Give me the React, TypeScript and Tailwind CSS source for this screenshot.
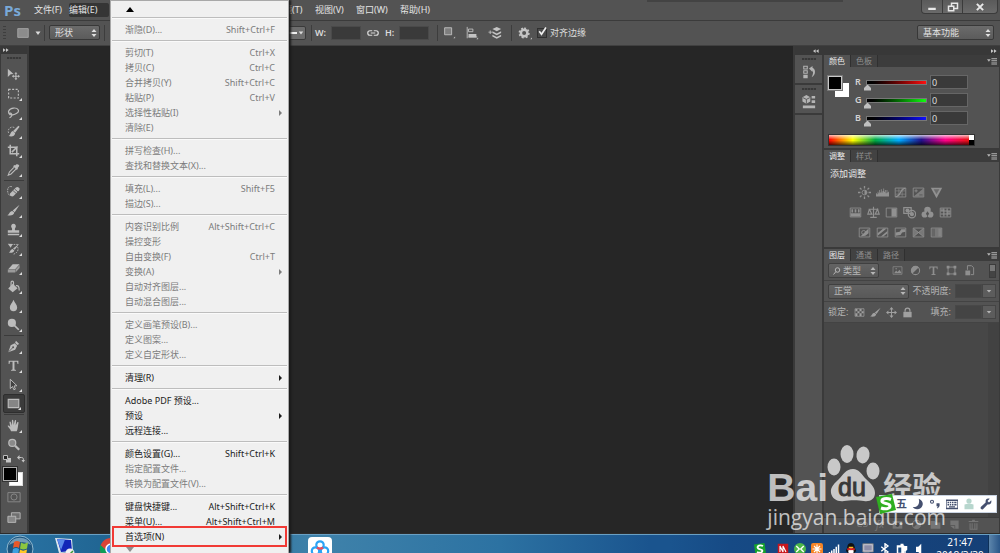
import type { ReactNode } from "react";
import clsx from "clsx";

type IconProps = { children: ReactNode; className?: string };

function Icon({ children, className }: IconProps) {
  return (
    <svg viewBox="0 0 16 16" className={clsx("shrink-0", className ?? "h-4 w-4")} fill="currentColor" aria-hidden="true">
      {children}
    </svg>
  );
}

const line = { fill: "none", stroke: "currentColor" };

function UpDown({ className }: { className?: string }) {
  return (
    <svg viewBox="0 0 6 8" className={clsx("pointer-events-none absolute h-2 w-1.5", className)} fill="currentColor">
      <path d="M3 0 5.500 3h-5zM3 8 .5 5h5z" />
    </svg>
  );
}

function Select({ label, value, className, children }: { label: string; value: string; className?: string; children?: ReactNode }) {
  return (
    <div className={clsx("relative flex h-[15px] items-center text-[#e0e0e0]", className)}>
      <select
        aria-label={label}
        className={clsx(
          "h-full w-full appearance-none rounded-xs border border-[#383838] bg-linear-to-b from-[#6b6b6b] to-[#5b5b5b] text-[9px] leading-3",
          children ? "pl-[14px]" : "pl-[5px]",
        )}
      >
        <option>{value}</option>
      </select>
      {children}
      <UpDown className="right-[3px]" />
    </div>
  );
}

const Divider = () => <div className="h-4 w-px bg-[#3d3d3d]" />;

/* ---------- menu bar ---------- */

function MenuBar() {
  const item = "h-3.5 rounded-xs text-left text-[9px] leading-3.5 text-[#e4e4e4]";
  return (
    <header className="flex h-[21px] shrink-0 items-start border-b border-[#3b3b3b] pl-1">
      <h1 className="w-[25px] font-['Open_Sans',sans-serif] text-[15px] leading-5 font-bold text-[#79a9d8]">Ps</h1>
      <nav className="flex pt-[3px]">
        <button className={clsx(item, "ml-[5px] w-[35px]")}>文件(F)</button>
        <button className={clsx(item, "w-10 bg-[#353535] text-center")}>编辑(E)</button>
        <button className={clsx(item, "ml-[165px] w-[41px]")}>滤镜(T)</button>
        <button className={clsx(item, "w-[41px]")}>视图(V)</button>
        <button className={clsx(item, "w-11")}>窗口(W)</button>
        <button className={item}>帮助(H)</button>
      </nav>
      <div className="mr-[78px] ml-auto h-0.5 w-[196px] bg-[#434343]" />
      <div className="mr-0.5 flex h-3.5 divide-x divide-[#3b3b3b] rounded-b-sm border border-t-0 border-[#3b3b3b] bg-linear-to-b from-[#5a5a5a] to-[#6a6a6a] text-[#e8e8e8]">
        <button aria-label="最小化" className="flex w-[21px] items-center justify-center">
          <Icon className="h-3 w-3"><path d="M3 9h10v3H3z" /></Icon>
        </button>
        <button aria-label="还原" className="flex w-5 items-center justify-center">
          <Icon className="h-3 w-3"><path {...line} strokeWidth="2" d="M6 6V3h8v7h-4M2 7h7v6H2z" /></Icon>
        </button>
        <button aria-label="关闭" className="flex w-[34px] items-center justify-center">
          <Icon className="h-2.5 w-2.5"><path {...line} strokeWidth="3.200" d="m3 3 10 10M13 3 3 13" /></Icon>
        </button>
      </div>
    </header>
  );
}

/* ---------- options bar ---------- */

function OptionsBar() {
  const field = "h-[14px] w-[30px] border border-[#4a4a4a] bg-[#3a3a3a] px-0.5 text-[9px] text-[#ddd]";
  return (
    <div className="flex h-[25px] shrink-0 items-center border-b border-[#404040] pb-px text-[9px] text-[#dcdcdc]">
      <div className="ml-[3px] h-3.5 w-[3px] bg-[repeating-linear-gradient(#3e3e3e_0_1px,transparent_1px_3px)]" />
      <button aria-label="矩形工具" className="ml-[10px] flex items-center">
        <Icon className="h-3.5 w-3.5"><path fill="#8c8c8c" stroke="#a8a8a8" d="M2 3h12v10H2z" /></Icon>
        <Icon className="ml-1 h-2 w-2"><path d="M3 5h10l-5 7z" /></Icon>
      </button>
      <div className="mr-1 ml-[2px]"><Divider /></div>
      <Select label="工具模式" value="形状" className="w-[51px]" />
      <div className="mx-1"><Divider /></div>
      <button aria-label="描边类型" className="ml-[143px] flex h-3.5 w-[54px] items-center justify-end rounded-xs border border-[#3a3a3a] bg-[#6d6d6d]">
        <span className="h-0.5 w-9 bg-[#eee]" />
        <Icon className="mx-px h-1.5 w-1.5"><path d="M2 4h12l-6 8z" /></Icon>
      </button>
      <div className="mr-[3px] ml-[5px]"><Divider /></div>
      <label htmlFor="shape-w" className="w-4 font-semibold">W:</label>
      <input id="shape-w" className={field} />
      <Icon className="mx-[6px] h-3 w-3"><path {...line} strokeWidth="1.600" d="M7 5H4a3 3 0 0 0 0 6h3M9 5h3a3 3 0 0 1 0 6H9M5 8h6" /></Icon>
      <label htmlFor="shape-h" className="w-3.5 font-semibold">H:</label>
      <input id="shape-h" className={field} />
      <div className="ml-2"><Divider /></div>
      <div className="ml-1 flex gap-[9px] text-[#c4c4c4]">
        <button aria-label="路径操作">
          <Icon className="h-3.5 w-3.5"><path fill="#7e7e7e" stroke="currentColor" d="M3 2h8v8H3z" /><path d="M15 12v2h-2z" /></Icon>
        </button>
        <button aria-label="路径对齐方式">
          <Icon className="h-3.5 w-3.5"><path {...line} d="M2.500 1v13M4 3.500h5v3H4zM4 12.500h10" /><path d="M4 9h9v4H4zM15 13v2h-2z" /></Icon>
        </button>
        <button aria-label="路径排列方式">
          <Icon className="h-3.5 w-3.5"><path d="m10 1 5 2.500L10 6 5 3.500zM5 6l5 2.500L15 6v2l-5 2.500L5 8zM5 10l5 2.500 5-2.500v2l-5 2.500L5 12zM2 5h1v1.500h1.500v1H3V9H2V7.500H.5v-1H2z" /></Icon>
        </button>
      </div>
      <div className="ml-[9px]"><Divider /></div>
      <button aria-label="设置" className="ml-[6px] text-[#c4c4c4]">
        <Icon className="h-3.5 w-3.5">
          <circle cx="7" cy="8" r="3.700" {...line} strokeWidth="2.800" />
          <path {...line} strokeWidth="1.800" strokeDasharray="2.200 2.120" d="M7 2.500a5.500 5.500 0 1 1-.01 0z" />
          <path d="M16 13v2h-2z" />
        </Icon>
      </button>
      <label className="ml-[5px] flex items-center gap-[3px]">
        <span className="relative flex">
          <input type="checkbox" defaultChecked className="peer h-2.5 w-2.5 appearance-none border border-[#303030] bg-[#4a4a4a]" />
          <Icon className="pointer-events-none absolute -top-0.5 left-0 hidden h-3 w-3 peer-checked:block">
            <path {...line} stroke="#eee" strokeWidth="2.200" d="m3 7 3 4 6-9" />
          </Icon>
        </span>
        对齐边缘
      </label>
      <Select label="工作区" value="基本功能" className="mr-1.5 ml-auto w-[77px]" />
    </div>
  );
}

/* ---------- toolbox ---------- */

type Tool = { name: string; art: ReactNode; active?: boolean; plain?: boolean };

const toolGroups: Tool[][] = [
  [
    { name: "移动工具", plain: true, art: <path d="M1 1l7 6.500-3.500.3L1 11zM11 5l1.800 2.200H11.600V9.500h2V8.200L16 10l-2.400 1.900v-1.200h-2v2h1.200L11 15l-1.900-2.300h1.200v-2h-2v1.200L6 10l2.300-1.900v1.300h2V7.200H9.100z" /> },
    { name: "矩形选框工具", art: <path {...line} strokeWidth="1.400" strokeDasharray="2.500 1.800" d="M2 3h12v10.500H2z" /> },
    { name: "套索工具", art: <path {...line} strokeWidth="1.500" d="M4 11C0 8 2 3 8 2.500c6-.5 8 4 4 6.500-3 2-7 2.500-8.500 1-1-1 1-2 2-.5s0 4-2.500 5" /> },
    { name: "快速选择工具", art: <><path {...line} strokeDasharray="2 1.500" d="M9 3C4 1 0 6 2 10" /><path d="M15.500 2 10 9.500 7.500 7.500 14 1zM7 7.500l3 2.500C9.500 13.500 6 15 2 13.500c2.500-1 2-5 5-6z" /></> },
    { name: "裁剪工具", art: <path {...line} strokeWidth="1.900" d="M4 1v11h11M1 4h11v11M6 10l7-7" /> },
    { name: "吸管工具", art: <><path d="M10 3c2-3 5-1 5 0s-1 2.500-2 3l.500 1L12 8.500 7.500 4 9 2.500z" /><path {...line} strokeWidth="1.300" d="M8.500 5.500 3 11l-1.500 4L5 13.500l6-6" /></> },
  ],
  [
    { name: "污点修复画笔工具", art: <><path {...line} strokeDasharray="2 1" d="M6 2C2 1 0 4 1 9s4 4 5 3" /><path d="m4 10 7-7c2-2 6 1 4 3.500l-7 7C6 15.500 2 12 4 10z" /><path stroke="#535353" d="m7.500 7 4 3.500M9.500 5l4 3.500" /></> },
    { name: "画笔工具", art: <path d="M15.500 1 9.500 10 7 8zM6.500 8.500 9 10.500C8.500 14 4 15 0 13.500c3 0 3-5 6.500-5z" /> },
    { name: "仿制图章工具", art: <path d="M8 1a3 3 0 0 1 2.500 4.500C9.500 7 9.500 8 10 9h5v3H1V9h5c.5-1 .5-2-.5-3.500A3 3 0 0 1 8 1zM1 13.300h14V15H1z" /> },
    { name: "历史记录画笔工具", art: <><path d="M15 2 9.500 9.500 7.500 8zM7 8.500l2 2C8.500 13 5 14 2 13c2-.5 2-4 5-4.500zM1 2l6 .5L4.500 7z" /><path {...line} strokeDasharray="2 1.200" d="M5 3h9M13 6c2 4-1 8-5 9" /></> },
    { name: "橡皮擦工具", art: <><path d="M7 4h8.500L10 10H1.500z" /><path fill="#9a9a9a" d="M1 10.500h9V14H1zM10.500 10.500 15.500 5v3.500l-5 5.500z" /></> },
    { name: "油漆桶工具", art: <><path d="M7 4.500 13 10l-6 5-5.500-4.500z" /><path {...line} strokeWidth="1.500" d="M8 9V3c0-2-3-2-3 0v5M11 7c3-.5 4 1 4 6" /></> },
    { name: "模糊工具", art: <path d="M8 1c1.500 4 4.500 6 4.500 9.500a4.500 4.500 0 0 1-9 0C3.500 7 6.500 5 8 1z" /> },
    { name: "减淡工具", art: <><circle cx="6" cy="6" r="5" /><path {...line} strokeWidth="2" d="m9 9 5.500 5.500" /></> },
  ],
  [
    { name: "钢笔工具", art: <><path d="M11 1l4 4-2.500 1L10 3.500zM9.500 4l3 3L10 12l-8.500 3L4.500 6.500z" /><path stroke="#535353" d="m2 14.500 5-5" /><circle cx="7.500" cy="9" r="1.200" fill="#535353" /></> },
    { name: "文字工具", art: <path d="M2 2h12v4h-1l-.7-2.500H9.200V13l1.800.6v.9H5v-.9l1.800-.6V3.500H3.700L3 6H2z" /> },
    { name: "路径选择工具", art: <path fill="#414141" stroke="currentColor" strokeWidth="1.200" d="M4 1.500V13l2.800-2.500 1.700 4 1.800-.8-1.600-3.900 3.500-.3z" /> },
    { name: "矩形工具", active: true, art: <path fill="#868686" stroke="currentColor" strokeWidth="1.400" d="M1.500 3h13v10h-13z" /> },
  ],
  [
    { name: "抓手工具", art: <path d="M5 15C4 12 1.500 10 .8 8.500c.7-.8 2-.3 3.200 1.300L3 4c0-1.200 1.500-1.200 1.700 0L6 8V2c0-1.300 1.700-1.300 1.800 0L8.200 7.500 9.500 2c.4-1.200 1.900-.8 1.700.4L10.700 8l1.800-3.800c.7-1 2-.4 1.600.8C13.500 8 13.500 12 12 15z" /> },
    { name: "缩放工具", plain: true, art: <><circle cx="6.500" cy="6" r="4.300" fill="#8a8a8a" stroke="currentColor" strokeWidth="1.500" /><path {...line} strokeWidth="2.800" d="m10 9.500 5 5" /></> },
  ],
];

function ToolButton({ name, art, active, plain }: Tool) {
  return (
    <button
      aria-label={name}
      className={clsx(
        "relative mx-0.5 flex h-[19px] items-center justify-center rounded-xs pr-0.5 text-[#bcbcbc]",
        active && "border border-[#2e2e2e] bg-[#3b3b3b]",
      )}
    >
      <Icon className="h-[13px] w-[13px]">{art}</Icon>
      {!plain && (
        <svg viewBox="0 0 3 3" className="absolute right-[3px] bottom-0.5 h-[3px] w-[3px]" fill="#ddd">
          <path d="M3 0v3H0z" />
        </svg>
      )}
    </button>
  );
}

function Toolbox() {
  return (
    <aside className="flex w-[29px] shrink-0 flex-col border-r-2 border-l border-[#3a3a3a] pb-2">
      <div className="flex h-[9px] items-center bg-[#383838] pl-0.5 text-[#c8c8c8]">
        <Icon className="h-1.5 w-1.5"><path d="m0 3 7 5-7 5zM8 3l7 5-7 5z" /></Icon>
      </div>
      <div className="mx-auto mt-[3px] mb-[6px] h-0.5 w-3.5 bg-[repeating-linear-gradient(90deg,#383838_0_2px,#484848_2px_3px)]" />
      {toolGroups.map((group, i) => (
        <div key={i} className="flex flex-col">
          {i > 0 && <div className="mx-[3px] my-px h-px bg-[#3b3b3b]" />}
          {group.map((tool) => (
            <ToolButton key={tool.name} {...tool} />
          ))}
        </div>
      ))}
      <div className="flex h-[11px] items-center justify-between px-0.5 text-[#c4c4c4]">
        <Icon className="h-2 w-2"><path fill="#222" stroke="#bbb" strokeWidth="2" d="M1 1h8v8H1z" /><path d="M10 6h6v9H6v-5h4z" /></Icon>
        <Icon className="h-2 w-2"><path {...line} strokeWidth="2" d="M3 5h6c3 0 4 1 4 7" /><path d="M5 0v10L0 5zM9 10h7l-3.500 5z" /></Icon>
      </div>
      <div className="relative mr-1 ml-0.5 mt-[3px] h-[21px]">
        <div className="absolute right-0 bottom-0 h-3.5 w-3.5 border border-[#ddd] bg-white" />
        <div className="absolute top-0 left-0 h-3.5 w-3.5 border border-[#aaa] bg-black outline outline-[#333]" />
      </div>
      <button aria-label="快速蒙版" className="mx-auto mt-1 text-[#8d8d8d]">
        <Icon className="h-3.5 w-3.5"><path {...line} d="M1 3h14v10.500H1z" /><circle cx="8" cy="8" r="3.500" {...line} /></Icon>
      </button>
      <button aria-label="屏幕模式" className="mx-auto mt-[7px] text-[#bbb]">
        <Icon className="h-3.5 w-3.5"><path fill="#707070" stroke="currentColor" d="M5 2h10v7H5z" /><path fill="#888" stroke="currentColor" d="M1 6h9v7H1z" /></Icon>
      </button>
    </aside>
  );
}

/* ---------- edit menu ---------- */

type Entry = { text: string; keys?: string; sub?: boolean; on?: boolean; marked?: boolean };

const editMenu: Entry[][] = [
  [{ text: "渐隐(D)...", keys: "Shift+Ctrl+F" }],
  [
    { text: "剪切(T)", keys: "Ctrl+X" },
    { text: "拷贝(C)", keys: "Ctrl+C" },
    { text: "合并拷贝(Y)", keys: "Shift+Ctrl+C" },
    { text: "粘贴(P)", keys: "Ctrl+V" },
    { text: "选择性粘贴(I)", sub: true },
    { text: "清除(E)" },
  ],
  [{ text: "拼写检查(H)..." }, { text: "查找和替换文本(X)..." }],
  [{ text: "填充(L)...", keys: "Shift+F5" }, { text: "描边(S)..." }],
  [
    { text: "内容识别比例", keys: "Alt+Shift+Ctrl+C" },
    { text: "操控变形" },
    { text: "自由变换(F)", keys: "Ctrl+T" },
    { text: "变换(A)", sub: true },
    { text: "自动对齐图层..." },
    { text: "自动混合图层..." },
  ],
  [{ text: "定义画笔预设(B)..." }, { text: "定义图案..." }, { text: "定义自定形状..." }],
  [{ text: "清理(R)", sub: true, on: true }],
  [
    { text: "Adobe PDF 预设...", on: true },
    { text: "预设", sub: true, on: true },
    { text: "远程连接...", on: true },
  ],
  [
    { text: "颜色设置(G)...", keys: "Shift+Ctrl+K", on: true },
    { text: "指定配置文件..." },
    { text: "转换为配置文件(V)..." },
  ],
  [
    { text: "键盘快捷键...", keys: "Alt+Shift+Ctrl+K", on: true },
    { text: "菜单(U)...", keys: "Alt+Shift+Ctrl+M", on: true },
    { text: "首选项(N)", sub: true, on: true, marked: true },
  ],
];

function EditMenu() {
  return (
    <div
      role="menu"
      aria-label="编辑"
      className="absolute inset-y-0 left-[110px] z-20 flex w-[179px] flex-col overflow-hidden border border-b-0 border-[#a8a8a8] bg-[#f0f0f0] px-px shadow-[2px_0_2px_#1a1a1a]"
    >
      <div className="h-4 shrink-0 pt-1.5 pl-[14px] text-black">
        <svg viewBox="0 0 8 5" className="h-[5px] w-2"><path d="m4 0 4 5H0z" /></svg>
      </div>
      {editMenu.map((group, i) => (
        <div key={i} className="shrink-0 border-t border-[#bdbdbd] pt-1 pb-[3px] shadow-[inset_0_1px_#fafafa]">
          {group.map((entry) => (
            <button
              key={entry.text}
              role="menuitem"
              disabled={!entry.on}
              className={clsx(
                "relative flex h-[15px] w-full items-center justify-between pr-3 pl-[13px] text-[9px] leading-[15px] whitespace-nowrap",
                entry.on ? "text-[#1c1c1c]" : "text-[#7c7c7c]",
              )}
            >
              <span>{entry.text}</span>
              {entry.keys && <span>{entry.keys}</span>}
              {entry.sub && (
                <svg viewBox="0 0 3 6" className="absolute right-[5px] h-1.5 w-[3px]" fill="currentColor"><path d="M0 0l3 3-3 3z" /></svg>
              )}
              {entry.marked && <span className="absolute -inset-y-[3px] inset-x-0 border-2 border-[#f13a35]" />}
            </button>
          ))}
        </div>
      ))}
      <div className="shrink-0 pl-[14px] text-[#8c8c8c]">
        <svg viewBox="0 0 8 5" className="h-[5px] w-2" fill="currentColor"><path d="M0 0h8L4 5z" /></svg>
      </div>
    </div>
  );
}

/* ---------- right dock ---------- */

function PanelTabs({ tabs }: { tabs: string[] }) {
  return (
    <div role="tablist" className="flex h-3 items-stretch bg-[#3c3c3c] text-[8px] leading-3">
      {tabs.map((tab, i) => (
        <button
          key={tab}
          role="tab"
          aria-selected={i === 0}
          className={clsx("w-[27px] border-r border-[#303030]", i === 0 ? "bg-[#535353] text-[#e8e8e8]" : "bg-[#424242] text-[#8f8f8f]")}
        >
          {tab}
        </button>
      ))}
      <button aria-label="面板菜单" className="mr-0.5 ml-auto text-[#b5b5b5]">
        <Icon className="h-2.5 w-2.5"><path d="M0 5h6L3 9zM7 3h9v1.500H7zM7 6h9v1.500H7zM7 9h9v1.500H7zM7 12h9v1.500H7z" /></Icon>
      </button>
    </div>
  );
}

const channels = [
  { name: "R", track: "[&::-webkit-slider-runnable-track]:to-[#ff1010]" },
  { name: "G", track: "[&::-webkit-slider-runnable-track]:to-[#10ff10]" },
  { name: "B", track: "[&::-webkit-slider-runnable-track]:to-[#1010ff]" },
];

function ColorPanel() {
  return (
    <section className="border-b-2 border-[#3a3a3a]">
      <PanelTabs tabs={["颜色", "色板"]} />
      <div className="flex pt-1.5">
        <div className="relative mt-[3px] ml-1 h-[21px] w-[21px] shrink-0">
          <div className="absolute right-0 bottom-0 h-3.5 w-3.5 bg-white" />
          <div className="absolute top-0 left-0 h-3.5 w-3.5 border border-[#c8c8c8] bg-black outline outline-[#777]" />
        </div>
        <div className="ml-[6px] flex flex-col">
          {channels.map((c) => (
            <div key={c.name} className="flex h-[18px] items-center">
              <label htmlFor={`channel-${c.name}`} className="w-3 text-[9px] font-semibold text-[#d2d2d2]">{c.name}</label>
              <input
                id={`channel-${c.name}`}
                type="range"
                min={0}
                max={255}
                defaultValue={0}
                className={clsx(
                  "h-2.5 w-[59px] appearance-none bg-transparent [&::-webkit-slider-runnable-track]:h-[3px] [&::-webkit-slider-runnable-track]:bg-linear-to-r [&::-webkit-slider-runnable-track]:from-black [&::-webkit-slider-runnable-track]:outline [&::-webkit-slider-runnable-track]:outline-[#777] [&::-webkit-slider-thumb]:mt-1 [&::-webkit-slider-thumb]:-ml-[3px] [&::-webkit-slider-thumb]:h-[6px] [&::-webkit-slider-thumb]:w-[7px] [&::-webkit-slider-thumb]:appearance-none [&::-webkit-slider-thumb]:bg-[#c0c0c0] [&::-webkit-slider-thumb]:[clip-path:polygon(50%_0,100%_60%,100%_100%,0_100%,0_60%)]",
                  c.track,
                )}
              />
              <input
                aria-label={`${c.name} 值`}
                defaultValue="0"
                className="ml-1 h-3.5 w-[38px] border border-[#666] bg-[#3a3a3a] pl-px text-[9px] text-[#ddd]"
              />
            </div>
          ))}
        </div>
      </div>
      <div className="mt-[7px] mb-0.5 ml-1 flex h-3 w-[147px] border border-[#333]">
        <div className="flex-1 bg-[linear-gradient(#fffb,#fff0_45%,#0000_55%,#000a),linear-gradient(90deg,#f00,#ff0_17%,#0a4_33%,#0af_50%,#218_66%,#f08_83%,#e11)]" />
        <div className="w-[5px] bg-linear-to-b from-white from-50% to-black to-50%" />
      </div>
    </section>
  );
}

const box = <path {...line} d="M1.500 2.500h13v11h-13z" />;

const adjustments: ReactNode[][] = [
  [
    <><circle cx="8" cy="8" r="3" {...line} /><path d="M8 5a3 3 0 0 1 0 6z" /><path {...line} strokeWidth="1.600" d="M8 0v3M8 13v3M0 8h3M13 8h3M2.300 2.300l2 2M11.700 11.700l2 2M2.300 13.700l2-2M11.700 4.300l2-2" /></>,
    <path d="M0 13V9h1v1h1V7h1v2h1V5h1v3h1V4h1v4h1V6h1V3h1v4h1V5h1v4h1V5h1v3h1V7h1v6z" />,
    <>{box}<path {...line} strokeWidth=".7" d="M6 3v10M10 3v10M2 6h12M2 10h12" /><path {...line} strokeWidth="1.600" d="M2 13c7 0 5-10 12-10" /></>,
    <>{box}<path d="M14 3v10H2z" opacity=".7" /><path {...line} d="M3 6h4M5 4v4" /><path stroke="#535353" d="M9 11h4" /></>,
    <><path d="M1 2h14L8 15z" /><path fill="#535353" d="M4.500 4h7L8 10z" opacity=".6" /></>,
  ],
  [
    <>{box}<path d="M2 9h12v4H2zM3 4h2v4H3zM7 4h2v4H7zM11 4h2v4h-2z" /></>,
    <path {...line} strokeWidth="1.400" d="M8 1v13M4 14h8M2 4h12M3 4 1 10h5L3 4M13 4l-3 6h5z" />,
    <>{box}<path d="M8 3h6v10H8z" /></>,
    <><path {...line} strokeWidth="1.500" d="M1 2h9v7H1z" /><circle cx="5.500" cy="5.500" r="2.500" /><circle cx="11" cy="10" r="4.500" {...line} strokeWidth="1.500" /><circle cx="11" cy="10" r="2.500" /></>,
    <><circle cx="8" cy="5" r="4" /><circle cx="4.500" cy="10.500" r="3.800" /><circle cx="11.500" cy="10.500" r="3.800" /><path fill="#535353" d="m8 6.500 2 3-2 3-2-3z" /></>,
    <>{box}<path d="M2 3h4v3H2zM10 6h4v4h-4z" opacity=".6" /><path {...line} strokeWidth="1.400" d="M6 3v10M10 3v10M2 6.200h12M2 9.800h12" /></>,
  ],
  [
    <>{box}<path d="m3 13 10-10v6l-4 3z" /><circle cx="7" cy="8" r="2.500" {...line} /></>,
    <>{box}<path d="M2 9 9 3h4L2 12zM6 13l8-7v3l-5 4z" /></>,
    <>{box}<path d="m2 8 5-1 2-3h5v3l-4 1-2 3-6 1z" /></>,
    <>{box}<path d="m2 3 6 5-6 5zM14 3 8 8l6 5z" opacity=".6" /><path {...line} d="m2 3 12 10M14 3 2 13" /></>,
    <>{box}<path d="M2 3h4v10H2z" opacity=".3" /><path d="M6 3h4v10H6z" opacity=".6" /><path d="M10 3h4v10h-4z" opacity=".8" /></>,
  ],
];

function AdjustmentsPanel() {
  return (
    <section className="border-b-2 border-[#3a3a3a] pb-2">
      <PanelTabs tabs={["调整", "样式"]} />
      <h2 className="pt-1 pl-1.5 text-[9px] leading-[15px] text-[#e6e6e6]">添加调整</h2>
      <div className="mt-1 flex w-[153px] flex-col items-center gap-1.5 text-[#919191]">
        {adjustments.map((row, i) => (
          <div key={i} className="flex gap-1">
            {row.map((art, j) => (
              <button key={j} aria-label={`调整 ${i + 1}-${j + 1}`} className="flex h-3.5 w-3.5 items-center justify-center">
                <Icon className="h-[13px] w-[13px]">{art}</Icon>
              </button>
            ))}
          </div>
        ))}
      </div>
    </section>
  );
}

function PercentField({ id, label }: { id: string; label: string }) {
  return (
    <div className="ml-auto flex items-center">
      <label htmlFor={id} className="mr-1">{label}</label>
      <input id={id} disabled className="h-3.5 w-[27px] border border-[#484848] bg-[#444]" />
      <button aria-label={`${label}选项`} className="flex h-3.5 w-3.5 items-center justify-center border border-[#454545] bg-[#5c5c5c]">
        <Icon className="h-1.5 w-1.5"><path d="M2 5h12l-6 7z" /></Icon>
      </button>
    </div>
  );
}

function LayersPanel() {
  const row = "flex items-center border-b border-[#434343] pr-[3px] pl-1 text-[9px] text-[#b4b4b4]";
  return (
    <section className="flex min-h-0 flex-1 flex-col">
      <PanelTabs tabs={["图层", "通道", "路径"]} />
      <div className={clsx(row, "h-5")}>
        <Select label="筛选类型" value="类型" className="w-[51px] opacity-70">
          <Icon className="pointer-events-none absolute left-[5px] h-2 w-2"><circle cx="9" cy="6" r="4.500" {...line} strokeWidth="2" /><path {...line} strokeWidth="2" d="m6 9-5 6" /></Icon>
        </Select>
        <div className="ml-[13px] flex gap-[7px] text-[#8f8f8f]">
          <Icon className="h-[11px] w-[11px]">{box}<path d="m3 12 3-4 2 2 3-3 3 5z" /><circle cx="6" cy="5.500" r="1" /></Icon>
          <Icon className="h-[11px] w-[11px]"><circle cx="8" cy="8" r="6" {...line} strokeWidth="1.500" /><path d="M12.500 3.500a6 6 0 1 0-9 9z" /></Icon>
          <Icon className="h-[11px] w-[11px]"><path d="M2 2h12v4h-1l-.7-2.500H9.200V13l1.800.6v.9H5v-.9l1.800-.6V3.500H3.700L3 6H2z" /></Icon>
          <Icon className="h-[11px] w-[11px]"><path {...line} strokeWidth="1.300" d="M3 3h10v10H3z" /><path d="M1 1h4v4H1zM11 1h4v4h-4zM1 11h4v4H1zM11 11h4v4h-4z" /></Icon>
          <Icon className="h-[11px] w-[11px]"><path {...line} strokeWidth="1.400" d="M5 7V1h6l3 3v10h-4" /><path d="M2 8h7v7H2z" /></Icon>
        </div>
        <button aria-label="图层过滤" className="ml-auto h-3.5 w-[7px] border border-[#3c3c3c] bg-linear-to-b from-[#777] from-50% to-[#444] to-50%" />
      </div>
      <div className={clsx(row, "h-[21px]")}>
        <Select label="混合模式" value="正常" className="w-[81px] opacity-70" />
        <PercentField id="opacity" label="不透明度:" />
      </div>
      <div className={clsx(row, "h-[21px]")}>
        <span>锁定:</span>
        <div className="ml-1.5 flex gap-[5px] text-[#a0a0a0]">
          <button aria-label="锁定透明像素"><Icon className="h-[11px] w-[11px]">{box}<path d="M2 3h3v3H2zM8 3h3v3H8zM5 6h3v3H5zM11 6h3v3h-3zM2 9h3v4H2zM8 9h3v4H8z" /></Icon></button>
          <button aria-label="锁定图像像素"><Icon className="h-[11px] w-[11px]"><path d="M15.500 1 9.500 10 7 8zM6.500 8.500 9 10.500C8.500 14 4 15 0 13.500c3 0 3-5 6.500-5z" /></Icon></button>
          <button aria-label="锁定位置"><Icon className="h-[11px] w-[11px]"><path d="m8 0 3 3.500H8.700v3.800h3.800V5L16 8l-3.500 3V8.700H8.700v3.800H11L8 16l-3-3.500h2.300V8.700H3.500V11L0 8l3.500-3v2.300h3.800V3.500H5z" /></Icon></button>
          <button aria-label="锁定全部"><Icon className="h-[11px] w-[11px]"><path d="M2 7h12v8H2z" /><path {...line} strokeWidth="1.800" d="M4.500 7V5a3.500 3.500 0 0 1 7 0v2" /></Icon></button>
        </div>
        <PercentField id="fill" label="填充:" />
      </div>
      <div className="flex-1 border-r-[11px] border-[#424242] bg-[#474747]" />
      <div className="mb-[3px] flex h-[13px] items-center justify-end gap-2 border-t border-[#3c3c3c] pr-5 text-[#757575]">
        <Icon className="h-[11px] w-[11px]"><path {...line} strokeWidth="1.600" d="M7 5H4a3 3 0 0 0 0 6h3M9 5h3a3 3 0 0 1 0 6H9M5 8h6" /></Icon>
        <span className="text-[10px] leading-3 italic">fx</span>
        <Icon className="h-[11px] w-[11px]"><path d="M1 3h14v11H1z" /><circle cx="8" cy="8.500" r="3" fill="#474747" /></Icon>
        <Icon className="h-[11px] w-[11px]"><circle cx="8" cy="8" r="6" {...line} strokeWidth="1.500" /><path d="M12.500 3.500a6 6 0 0 1-9 9z" /></Icon>
        <Icon className="h-[11px] w-[11px]"><path d="M1 3h6l1 2h7v9H1z" /></Icon>
        <Icon className="h-[11px] w-[11px]"><path d="M2 2h12v12H9V9H2z" /><path d="M2 10h6v5z" /></Icon>
        <Icon className="h-[11px] w-[11px]"><path d="M1 3h5V1h4v2h5v1.500H1z" /><path {...line} strokeWidth="1.500" d="M3 6v9h10V6M6 6v8M10 6v8" /></Icon>
      </div>
    </section>
  );
}

function Dock() {
  const grip = "mx-auto mt-[3px] h-0.5 w-3.5 bg-[repeating-linear-gradient(90deg,#383838_0_2px,#484848_2px_3px)]";
  return (
    <aside className="flex w-[207px] shrink-0 flex-col border-l-2 border-[#393939]">
      <div className="flex h-[9px] shrink-0 items-center bg-[#383838] pr-[3px] pl-[18px] text-[#c8c8c8]">
        <Icon className="h-1.5 w-1.5"><path d="M7 3v10L0 8zM15 3v10L8 8z" /></Icon>
        <Icon className="ml-auto h-1.5 w-1.5"><path d="m0 3 7 5-7 5zM8 3l7 5-7 5z" /></Icon>
      </div>
      <div className="flex min-h-0 flex-1">
        <div className="w-[29px] shrink-0 border-r-2 border-[#3a3a3a] text-[#b4b4b4]">
          <div className="flex h-[30px] flex-col border-b-2 border-[#3a3a3a]">
            <div className={grip} />
            <button aria-label="历史记录" className="mx-auto mt-[5px]">
              <Icon className="h-3.5 w-3.5"><path {...line} strokeWidth="1.200" d="M2 1.500h4v3H2zM2 6.500h4v3H2z" /><path d="M1.500 11h5v4h-5zM8 4l4-3v2c4 2 4 8-1 11 2-4 2-6 1-8v2z" /></Icon>
            </button>
          </div>
          <div className="flex h-[30px] flex-col border-b-2 border-[#3a3a3a]">
            <div className={grip} />
            <button aria-label="属性" className="mx-auto mt-[5px]">
              <Icon className="h-3.5 w-3.5"><path d="m5 0 4.500 2.500v5L5 10 .5 7.500v-5zM11 1h4v3h-4zM11 6h4v3h-4zM1 12h14v3H1z" /><path stroke="#535353" fill="none" d="m1 3 4 2 4-2M5 5v5" /></Icon>
            </button>
          </div>
        </div>
        <div className="flex min-w-0 flex-1 flex-col border-r border-[#3a3a3a]">
          <ColorPanel />
          <AdjustmentsPanel />
          <LayersPanel />
        </div>
      </div>
    </aside>
  );
}

/* ---------- desktop ---------- */

function Taskbar() {
  return (
    <footer className="flex h-[19px] shrink-0 items-start overflow-hidden border-t border-[#69a0c4] bg-[linear-gradient(90deg,#2a74a5,#1f6390_12%,#3f82aa_32%,#2c72a2_50%,#1a548e_65%,#1a548e_67%,#164a85_73%,#153f76)] pl-1.5">
      <button aria-label="开始" className="shrink-0">
        <svg viewBox="0 0 28 28" className="h-7 w-7">
          <circle cx="14" cy="14" r="13" fill="#1d5680" stroke="#8fb8cf" />
          <path fill="#a9c9dc" opacity=".6" d="M3 10a12 12 0 0 1 22 0c-6-4-16-4-22 0z" />
          <path fill="#e8582a" d="M8 7c2-1.500 4-1.500 6 0l-1 6c-2-1.500-4-1.500-6 0z" />
          <path fill="#8cc63f" d="M15 7.500c2 1.500 4 1.500 7 0l-1 6c-3 1.500-5 1-7 0z" />
          <path fill="#3aa0e0" d="M7 14c2-1.500 4-1.500 6 0l-1 6c-2-1.500-4-1.500-6 0z" />
          <path fill="#ffc928" d="M14 14.500c2 1.500 4 1.500 7 0l-1 6c-3 1.500-5 1-7 0z" />
        </svg>
      </button>
      <button aria-label="远程桌面" className="mt-0.5 ml-5">
        <svg viewBox="0 0 22 20" className="h-5 w-[22px]">
          <path fill="#dfe8ef" d="m1 1 17 1 1 13-14 1z" />
          <path fill="#1226b8" d="m3 2 14 1 1 11-11 1z" />
          <path fill="#5b8bea" d="m3 2 8 .5L7 13z" />
          <circle cx="16" cy="16" r="4.500" fill="#eee" />
          <path fill="none" stroke="#3a9b35" strokeWidth="1.500" d="m13 17 2 1 4-4" />
        </svg>
      </button>
      <button aria-label="Chrome" className="mt-0.5 ml-[23px]">
        <svg viewBox="0 0 24 24" className="h-6 w-6">
          <circle cx="12" cy="12" r="11" fill="#db4437" />
          <path fill="#0f9d58" d="M1.500 8 9 15l3 8C4 23-1 15 1.500 8z" />
          <circle cx="12" cy="12" r="5" fill="#4285f4" stroke="#fff" strokeWidth="1.500" />
        </svg>
      </button>
      <button aria-label="百度网盘" className="mt-0.5 ml-[185px]">
        <svg viewBox="0 0 24 24" className="h-6 w-6">
          <rect width="24" height="24" rx="4" fill="#fff" />
          <g fill="none" strokeWidth="2.200">
            <circle cx="12" cy="8" r="3.700" stroke="#2aa3f5" />
            <circle cx="7.500" cy="14" r="3.700" stroke="#2aa3f5" />
            <circle cx="16.500" cy="14" r="3.700" stroke="#2aa3f5" />
            <path stroke="#f04a5a" d="M9 10.500c2 1.500 4 1.500 6 0" />
          </g>
        </svg>
      </button>
      <div className="mt-[7px] ml-auto flex items-center gap-[5px]">
        <Icon className="mr-1.5 h-3 w-3"><path fill="#17a42c" d="m0 2 14-2 2 14-14 2z" /><path fill="none" stroke="#fff" strokeWidth="2.500" d="M12 4C8 2 4 4 5 6.500S12 8 11 11s-5 2-7 1" /></Icon>
        <Icon className="h-3 w-3"><path fill="#c8161d" d="M1 1h14v14H1z" /><path fill="none" stroke="#fff" strokeWidth="1.500" d="M4 12V4l4 8V4l4 8" /></Icon>
        <Icon className="h-3.5 w-3"><circle cx="8" cy="8" r="8" fill="#4db748" /><path fill="none" stroke="#fff" strokeWidth="1.800" d="m3 4 4 4-4 4M13 4 9 8l4 4" /></Icon>
        <Icon className="h-3 w-3"><rect width="16" height="16" rx="3" fill="#f58426" /><path fill="none" stroke="#fff" strokeWidth="1.500" d="M8 2v12M2 8h12M4 4l8 8M12 4l-8 8" /></Icon>
        <Icon className="h-3 w-3"><path fill="#fff" d="M1 12h2v3H1zM4 10h2v5H4zM7 8h2v7H7zM10 5h2v10h-2zM13 2h2v13h-2z" /></Icon>
        <Icon className="h-3 w-3"><path fill="#111" d="M8 0c4 0 5 4 5 6l2 5-2 1-1 3H4l-1-3-2-1 2-5c0-2 1-6 5-6z" /><ellipse cx="8" cy="11" rx="3.500" ry="4" fill="#fff" /><path fill="#e02020" d="M3 7h10v2.500H3z" /><path fill="#fb2" d="M5 5h6v1.500H5zM3 14h4v2H3zM9 14h4v2H9z" /></Icon>
        <Icon className="h-3 w-3"><path fill="#c9c9d4" stroke="#777" d="M1 1h14v11H1z" /><path fill="#8d8da8" d="M3 3h10v7H3z" /><path fill="#ddd" d="M2 13h8v3H2z" /></Icon>
        <Icon className="h-3 w-3"><path fill="none" stroke="#fff" strokeWidth="1.800" d="m3 5 9 7-4 3V1l4 3-9 7" /></Icon>
        <Icon className="h-3 w-3"><path fill="#fff" d="M1 3h5V1h4v2h1v12H1z" /><path fill="#1a4a80" d="M3 6h4v7H3z" /><path fill="#fff" d="M9 4h6v5l-2 2v4h-2v-4L9 9z" /></Icon>
        <Icon className="h-3 w-3"><path fill="#fff" d="M4 5h3l4-4v15l-4-4H4z" /></Icon>
      </div>
      <time className="mr-[3px] ml-[10px] w-[50px] pt-px text-center text-[10px] leading-[13px] text-white">
        21:47
        <br />
        2018/3/30
      </time>
      <button aria-label="显示桌面" className="h-5 w-3 border-l border-[#0e3159] bg-linear-to-r from-[#5d86ac] to-[#2a5688]" />
    </footer>
  );
}

function ImeBar() {
  return (
    <div className="absolute right-[3px] bottom-10 z-10 flex h-[18px] w-[118px] items-center justify-end gap-[5px] border border-[#c9d3e2] bg-white pr-1 text-[#45506f]">
      <svg viewBox="0 0 20 20" className="absolute -left-1 h-5 w-5">
        <path fill="#2fae1f" d="m0 3 16-3 4 16-16 4z" />
        <path fill="none" stroke="#fff" strokeWidth="3" d="M15 5.500C10 3.500 5.500 5 6 7.500s8 1.500 8 4.500-5 3.500-9 2" />
      </svg>
      <span className="text-[11px] leading-4 font-bold">五</span>
      <Icon className="h-3 w-3"><path d="M9 1c5 2 7 7 4 11s-9 4-12 0c6 1 10-4 8-11z" /></Icon>
      <Icon className="h-3 w-3"><circle cx="4" cy="5" r="2" {...line} strokeWidth="1.500" /><path d="M10 7h4c1 4-1 6-3 7v-2l1-1h-2z" /></Icon>
      <Icon className="h-3 w-3"><path {...line} strokeWidth="1.800" d="M0 3h16v11H0z" /><path d="M2 5h2v2H2zM5 5h2v2H5zM8 5h2v2H8zM11 5h3v2h-3zM2 8h2v2H2zM5 8h2v2H5zM8 8h2v2H8zM11 8h3v2h-3zM4 11h8v1.500H4z" /></Icon>
      <Icon className="h-3 w-3 text-[#b7d6cd]"><circle cx="8" cy="4" r="3.500" /><path d="M2 15V8.500l4-1h4l4 1V15z" /></Icon>
      <Icon className="h-3 w-3"><path d="M15 3c1 4-1 6-5 5.500L4 15c-2 1-4-1-3-3l6.500-6C7 2 9 0 13 1l-3 3 2 2z" /></Icon>
    </div>
  );
}

function Watermark() {
  return (
    <div className="pointer-events-none absolute right-[54px] bottom-5 z-10 text-white opacity-70">
      <div className="flex h-[58px] items-end font-['Liberation_Sans','Noto_Sans_CJK_SC',sans-serif] font-bold">
        <span className="w-[60px] text-[39px] leading-7">Bai</span>
        <svg viewBox="0 0 54 57" className="h-[57px] w-[54px]" fill="currentColor">
          <ellipse cx="7" cy="22" rx="6.500" ry="8.500" />
          <ellipse cx="20" cy="9" rx="6.500" ry="9" />
          <ellipse cx="36" cy="10" rx="6.500" ry="8.500" transform="rotate(10 36 10)" />
          <ellipse cx="46" cy="26" rx="6.500" ry="8.500" />
          <path d="M26 24c6 0 9 6 13 10s9 8 9 14-5 9-11 8-14-1-20 0S5 54 4 48s4-10 8-14 7-10 14-10z" />
          <text x="11" y="51" fontSize="25" fontWeight="400" fill="#333" stroke="#333">du</text>
        </svg>
        <span className="pl-0.5 text-[29px] leading-7">经验</span>
      </div>
      <p className="font-['Open_Sans','Noto_Sans',sans-serif] text-[21px] leading-[31px] font-medium">jingyan.baidu.com</p>
    </div>
  );
}

export default function App() {
  return (
    <div className="relative flex h-screen flex-col overflow-hidden bg-[#535353] font-['Noto_Sans','Noto_Sans_CJK_SC',sans-serif] select-none">
      <MenuBar />
      <OptionsBar />
      <div className="flex min-h-0 flex-1 border-b border-[#2c2c2c]">
        <Toolbox />
        <main className="min-w-0 flex-1 bg-[#262626]" />
        <Dock />
      </div>
      <Taskbar />
      <EditMenu />
      <Watermark />
      <ImeBar />
    </div>
  );
}
